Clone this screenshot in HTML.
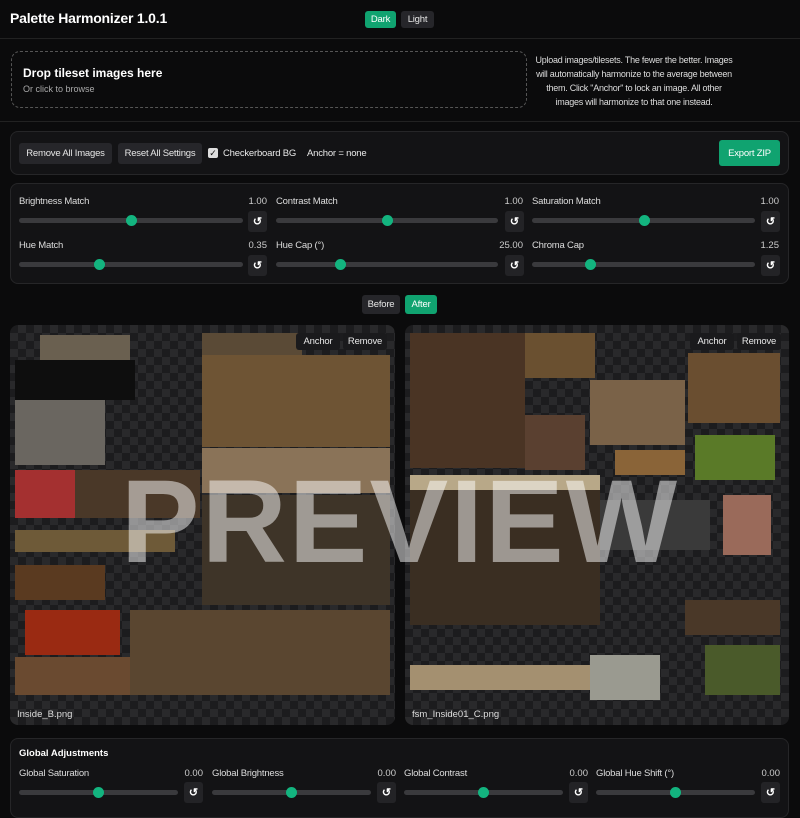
<!DOCTYPE html>
<html><head><meta charset="utf-8"><style>
*{box-sizing:border-box;margin:0;padding:0}
body{width:800px;height:811px;overflow:hidden;background:#0b0b0c;color:#e8e8e8;font-family:"Liberation Sans",sans-serif;font-size:10px;position:relative}
.a{position:absolute}
.btn{position:absolute;background:#26262a;color:#e6e6e6;border-radius:3px;font-size:9.5px;display:flex;align-items:center;justify-content:center;letter-spacing:-0.2px}
.g{background:#10a370;color:#fff}
.card{position:absolute;background:#131315;border:1px solid #262628;border-radius:8px}
.lbl{position:absolute;font-size:9.5px;color:#ddd;letter-spacing:-0.2px}
.val{position:absolute;font-size:9.5px;color:#ccc;text-align:right}
.tr{position:absolute;height:5px;background:#3a3a3d;border-radius:3px}
.th{position:absolute;width:11px;height:11px;border-radius:50%;background:#13b47f;top:-3px;margin-left:-5px}
.rs{position:absolute;width:19px;height:21px;background:#232326;border-radius:3px;color:#fff;font-size:11px;font-weight:bold;display:flex;align-items:center;justify-content:center}
.pan{position:absolute;top:325px;height:400px;border-radius:8px;overflow:hidden;background-color:#1c1c1e;background-image:linear-gradient(45deg,#29292b 25%,transparent 25%,transparent 75%,#29292b 75%),linear-gradient(45deg,#29292b 25%,transparent 25%,transparent 75%,#29292b 75%);background-size:16px 16px;background-position:0 0,8px 8px}
.b{position:absolute}
</style></head><body>
<div class="a" style="left:10px;top:10px;font-size:14px;font-weight:bold;color:#fff;letter-spacing:-0.2px">Palette Harmonizer 1.0.1</div>
<div class="btn g" style="left:365px;top:11px;width:31px;height:17px">Dark</div>
<div class="btn" style="left:401px;top:11px;width:33px;height:17px">Light</div>
<div class="a" style="left:0;top:38px;width:800px;height:1px;background:#222"></div>
<div class="a" style="left:11px;top:51px;width:516px;height:57px;border:1px dashed #555;border-radius:9px"></div>
<div class="a" style="left:23px;top:66px;font-size:12px;font-weight:bold;color:#fff">Drop tileset images here</div>
<div class="a" style="left:23px;top:84px;font-size:9px;color:#aaa">Or click to browse</div>
<div class="a" style="left:532px;top:53px;width:204px;text-align:center;font-size:9px;line-height:14px;color:#ddd;letter-spacing:-0.25px">Upload images/tilesets. The fewer the better. Images will automatically harmonize to the average between them. Click "Anchor" to lock an image. All other images will harmonize to that one instead.</div>
<div class="a" style="left:0;top:121px;width:800px;height:1px;background:#222"></div>

<div class="card" style="left:10px;top:131px;width:779px;height:44px"></div>
<div class="btn" style="left:19px;top:143px;width:93px;height:21px">Remove All Images</div>
<div class="btn" style="left:118px;top:143px;width:84px;height:21px">Reset All Settings</div>
<div class="a" style="left:208px;top:148px;width:10px;height:10px;background:#ddd;border-radius:2px;color:#111;font-size:9px;line-height:10px;text-align:center">✓</div>
<div class="a" style="left:223px;top:148px;font-size:9.5px;letter-spacing:-0.2px">Checkerboard BG</div>
<div class="a" style="left:307px;top:148px;font-size:9.5px;letter-spacing:-0.2px">Anchor = none</div>
<div class="btn g" style="left:719px;top:140px;width:61px;height:26px">Export ZIP</div>

<div class="card" style="left:10px;top:183px;width:779px;height:101px"></div>
<div class="lbl" style="left:19px;top:196px">Brightness Match</div><div class="val" style="left:220px;top:196px;width:47px">1.00</div>
<div class="tr" style="left:19px;top:218px;width:224px"><div class="th" style="left:112px"></div></div><div class="rs" style="left:248px;top:211px">↺</div>
<div class="lbl" style="left:276px;top:196px">Contrast Match</div><div class="val" style="left:476px;top:196px;width:47px">1.00</div>
<div class="tr" style="left:276px;top:218px;width:222px"><div class="th" style="left:111px"></div></div><div class="rs" style="left:505px;top:211px">↺</div>
<div class="lbl" style="left:532px;top:196px">Saturation Match</div><div class="val" style="left:732px;top:196px;width:47px">1.00</div>
<div class="tr" style="left:532px;top:218px;width:223px"><div class="th" style="left:112px"></div></div><div class="rs" style="left:761px;top:211px">↺</div>
<div class="lbl" style="left:19px;top:240px">Hue Match</div><div class="val" style="left:220px;top:240px;width:47px">0.35</div>
<div class="tr" style="left:19px;top:262px;width:224px"><div class="th" style="left:80px"></div></div><div class="rs" style="left:248px;top:255px">↺</div>
<div class="lbl" style="left:276px;top:240px">Hue Cap (°)</div><div class="val" style="left:476px;top:240px;width:47px">25.00</div>
<div class="tr" style="left:276px;top:262px;width:222px"><div class="th" style="left:64px"></div></div><div class="rs" style="left:505px;top:255px">↺</div>
<div class="lbl" style="left:532px;top:240px">Chroma Cap</div><div class="val" style="left:732px;top:240px;width:47px">1.25</div>
<div class="tr" style="left:532px;top:262px;width:223px"><div class="th" style="left:58px"></div></div><div class="rs" style="left:761px;top:255px">↺</div>

<div class="btn" style="left:362px;top:295px;width:38px;height:19px">Before</div>
<div class="btn g" style="left:405px;top:295px;width:32px;height:19px">After</div>

<div class="pan" style="left:10px;width:385px">
 <div class="b" style="left:30px;top:10px;width:90px;height:45px;background:#6a6050"></div>
 <div class="b" style="left:5px;top:35px;width:120px;height:40px;background:#0e0e0e"></div>
 <div class="b" style="left:5px;top:75px;width:90px;height:65px;background:#6a6660"></div>
 <div class="b" style="left:5px;top:145px;width:60px;height:48px;background:#a43030"></div>
 <div class="b" style="left:65px;top:145px;width:125px;height:48px;background:#4a3828"></div>
 <div class="b" style="left:5px;top:205px;width:160px;height:22px;background:#6e5a38"></div>
 <div class="b" style="left:5px;top:240px;width:90px;height:35px;background:#5a3a20"></div>
 <div class="b" style="left:15px;top:285px;width:95px;height:45px;background:#9a2a12"></div>
 <div class="b" style="left:5px;top:332px;width:120px;height:38px;background:#6a4a30"></div>
 <div class="b" style="left:192px;top:8px;width:100px;height:22px;background:#5a4a36"></div>
 <div class="b" style="left:192px;top:30px;width:188px;height:92px;background:#6e5434"></div>
 <div class="b" style="left:192px;top:123px;width:188px;height:45px;background:#8a7358"></div>
 <div class="b" style="left:192px;top:170px;width:188px;height:110px;background:#3e3428"></div>
 <div class="b" style="left:120px;top:285px;width:260px;height:85px;background:#5a4630"></div>
 <div class="a" style="left:7px;top:384px;font-size:9.5px;color:#ddd">Inside_B.png</div>
 <div class="btn" style="left:286px;top:8px;width:44px;height:17px;background:#1a1a1c">Anchor</div>
 <div class="btn" style="left:333px;top:8px;width:44px;height:17px;background:#1a1a1c">Remove</div>
</div>
<div class="pan" style="left:405px;width:384px">
 <div class="b" style="left:5px;top:8px;width:115px;height:135px;background:#4a3424"></div>
 <div class="b" style="left:120px;top:8px;width:70px;height:45px;background:#6a5030"></div>
 <div class="b" style="left:185px;top:55px;width:95px;height:65px;background:#7a6248"></div>
 <div class="b" style="left:120px;top:90px;width:60px;height:55px;background:#5a4030"></div>
 <div class="b" style="left:283px;top:28px;width:92px;height:70px;background:#6a4e30"></div>
 <div class="b" style="left:290px;top:110px;width:80px;height:45px;background:#5a7a28"></div>
 <div class="b" style="left:210px;top:125px;width:70px;height:25px;background:#8a6438"></div>
 <div class="b" style="left:5px;top:150px;width:190px;height:15px;background:#b8a888"></div>
 <div class="b" style="left:5px;top:165px;width:190px;height:135px;background:#3a2e22"></div>
 <div class="b" style="left:195px;top:175px;width:110px;height:50px;background:#3a3a3a"></div>
 <div class="b" style="left:318px;top:170px;width:48px;height:60px;background:#9a6a5a"></div>
 <div class="b" style="left:280px;top:275px;width:95px;height:35px;background:#4a3828"></div>
 <div class="b" style="left:5px;top:340px;width:180px;height:25px;background:#a49070"></div>
 <div class="b" style="left:185px;top:330px;width:70px;height:45px;background:#9a9a90"></div>
 <div class="b" style="left:300px;top:320px;width:75px;height:50px;background:#4a5a2a"></div>
 <div class="a" style="left:7px;top:384px;font-size:9.5px;color:#ddd">fsm_Inside01_C.png</div>
 <div class="btn" style="left:285px;top:8px;width:44px;height:17px;background:#1a1a1c">Anchor</div>
 <div class="btn" style="left:332px;top:8px;width:44px;height:17px;background:#1a1a1c">Remove</div>
</div>
<div class="a" style="left:0;top:462px;width:800px;text-align:center;font-size:118px;font-weight:bold;color:rgba(255,255,255,0.5);letter-spacing:2px;line-height:120px">PREVIEW</div>

<div class="card" style="left:10px;top:738px;width:779px;height:80px"></div>
<div class="a" style="left:19px;top:748px;font-size:9.5px;font-weight:bold;color:#fff">Global Adjustments</div>
<div class="lbl" style="left:19px;top:768px">Global Saturation</div><div class="val" style="left:150px;top:768px;width:53px">0.00</div>
<div class="tr" style="left:19px;top:790px;width:159px"><div class="th" style="left:79px"></div></div><div class="rs" style="left:184px;top:782px">↺</div>
<div class="lbl" style="left:212px;top:768px">Global Brightness</div><div class="val" style="left:343px;top:768px;width:53px">0.00</div>
<div class="tr" style="left:212px;top:790px;width:159px"><div class="th" style="left:79px"></div></div><div class="rs" style="left:377px;top:782px">↺</div>
<div class="lbl" style="left:404px;top:768px">Global Contrast</div><div class="val" style="left:535px;top:768px;width:53px">0.00</div>
<div class="tr" style="left:404px;top:790px;width:159px"><div class="th" style="left:79px"></div></div><div class="rs" style="left:569px;top:782px">↺</div>
<div class="lbl" style="left:596px;top:768px">Global Hue Shift (°)</div><div class="val" style="left:727px;top:768px;width:53px">0.00</div>
<div class="tr" style="left:596px;top:790px;width:159px"><div class="th" style="left:79px"></div></div><div class="rs" style="left:761px;top:782px">↺</div>
</body></html>
